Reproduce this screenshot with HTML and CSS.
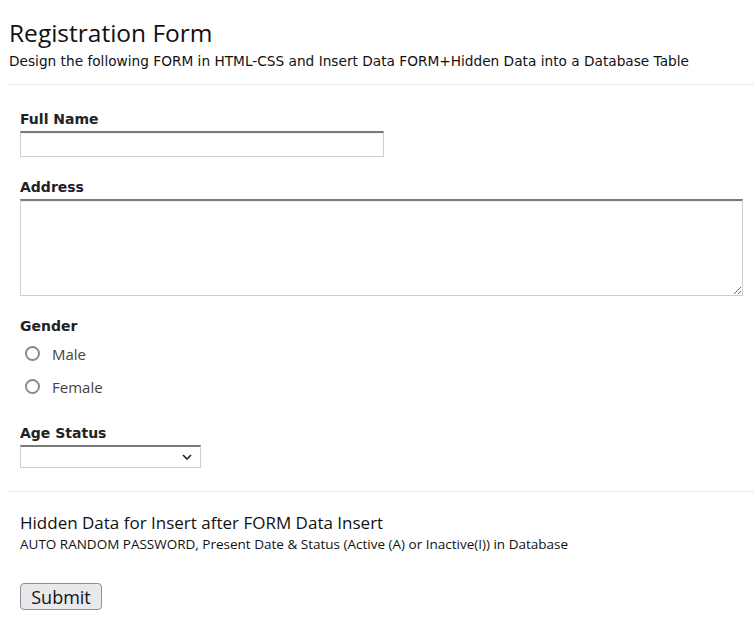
FILE: index.html
```html
<!DOCTYPE html>
<html lang="en">
<head>
<meta charset="utf-8">
<title>Registration Form</title>
<link rel="stylesheet" href="styles.css">
</head>
<body>
<div class="page">
  <header class="head">
    <h1 class="title">Registration Form</h1>
    <p class="subtitle">Design the following FORM in HTML-CSS and Insert Data FORM+Hidden Data into a Database Table</p>
  </header>
  <hr class="rule">
  <form class="form">
    <div class="field field-name">
      <label class="label" for="fullname">Full Name</label>
      <input class="text-input" id="fullname" type="text">
    </div>
    <div class="field field-address">
      <label class="label" for="address">Address</label>
      <textarea class="text-area" id="address"></textarea>
    </div>
    <div class="field field-gender">
      <span class="label">Gender</span>
      <label class="radio-row"><input class="radio" type="radio" name="gender"><span class="radio-text">Male</span></label>
      <label class="radio-row"><input class="radio" type="radio" name="gender"><span class="radio-text">Female</span></label>
    </div>
    <div class="field field-age">
      <label class="label" for="age">Age Status</label>
      <div class="select-wrap">
        <select class="select" id="age"><option></option></select>
        <svg class="chevron" width="10" height="6" viewBox="0 0 10 6"><path d="M1 1 L5 5 L9 1" fill="none" stroke="#222" stroke-width="1.6"/></svg>
      </div>
    </div>
  </form>
  <hr class="rule">
  <section class="hidden-info">
    <h2 class="hidden-title">Hidden Data for Insert after FORM Data Insert</h2>
    <p class="hidden-text">AUTO RANDOM PASSWORD, Present Date &amp; Status (Active (A) or Inactive(I)) in Database</p>
    <button class="submit" type="button">Submit</button>
  </section>
</div>
</body>
</html>
```

FILE: styles.css
```css
* { box-sizing: border-box; }

body {
  margin: 0;
  background: #fff;
  color: #111;
  font-family: "Open Sans", sans-serif;
}

.page {
  padding: 0 2px 0 9px;
}

.head {
  padding-top: 18px;
}

.title {
  margin: 0;
  font-family: "Open Sans", sans-serif;
  font-weight: 400;
  font-size: 24.5px;
  line-height: 30px;
  color: #111;
}

.subtitle {
  margin: 5px 0 0;
  font-family: "DejaVu Sans", sans-serif;
  font-size: 13.7px;
  line-height: 17px;
  color: #111;
}

.rule {
  margin: 14px 0 0;
  border: 0;
  border-top: 1px dotted #d8d8d8;
  height: 0;
}

.form {
  padding: 26px 0 9px 11px;
  display: flex;
  flex-direction: column;
}

.field {
  display: flex;
  flex-direction: column;
  align-items: flex-start;
}

.field-address { margin-top: 22px; }
.field-gender { margin-top: 22px; }
.field-age { margin-top: 22px; }

.label {
  font-family: "DejaVu Sans", sans-serif;
  font-weight: 700;
  font-size: 14px;
  line-height: 17px;
  color: #222;
  margin-bottom: 3px;
}

.text-input,
.text-area {
  border: 1px solid #cfcfcf;
  border-top: 2px solid #7a7a7a;
  box-shadow: inset 0 1px 1px rgba(0,0,0,0.06);
  background: #fff;
  padding: 2px 4px;
  font: inherit;
  outline: none;
}

.text-input {
  width: 364px;
  height: 26px;
}

.text-area {
  width: 723px;
  height: 97px;
  resize: both;
}

.radio-row {
  display: flex;
  align-items: center;
  height: 33px;
  padding-left: 5px;
}

.field-gender .label { margin-bottom: 2px; }

.radio {
  appearance: none;
  -webkit-appearance: none;
  margin: 0;
  width: 15px;
  height: 15px;
  border: 2px solid #8a8a8f;
  border-radius: 50%;
  background: #fff;
}

.radio-text {
  margin-left: 12px;
  font-family: "Open Sans", sans-serif;
  font-size: 15px;
  color: #444;
}

.select-wrap {
  position: relative;
  width: 181px;
  height: 23px;
}

.select {
  appearance: none;
  -webkit-appearance: none;
  width: 100%;
  height: 100%;
  border: 1px solid #cfcfcf;
  border-top: 2px solid #7a7a7a;
  border-radius: 0;
  background: #fff;
  font: inherit;
  outline: none;
}

.chevron {
  position: absolute;
  right: 9px;
  top: 9px;
}

.hidden-info {
  padding: 20px 0 20px 11px;
}

.hidden-title {
  margin: 0;
  font-family: "Open Sans", sans-serif;
  font-weight: 400;
  font-size: 17px;
  line-height: 22px;
  color: #111;
}

.hidden-text {
  margin: 2px 0 0;
  font-family: "Open Sans", sans-serif;
  font-size: 13.5px;
  line-height: 17px;
  color: #111;
}

.submit {
  margin-top: 30px;
  width: 82px;
  height: 27px;
  padding: 0;
  font-family: "Open Sans", sans-serif;
  font-size: 18px;
  line-height: 1;
  color: #111;
  background: #e9e9ed;
  border: 1px solid #8f8f9d;
  border-radius: 4px;
}
```
